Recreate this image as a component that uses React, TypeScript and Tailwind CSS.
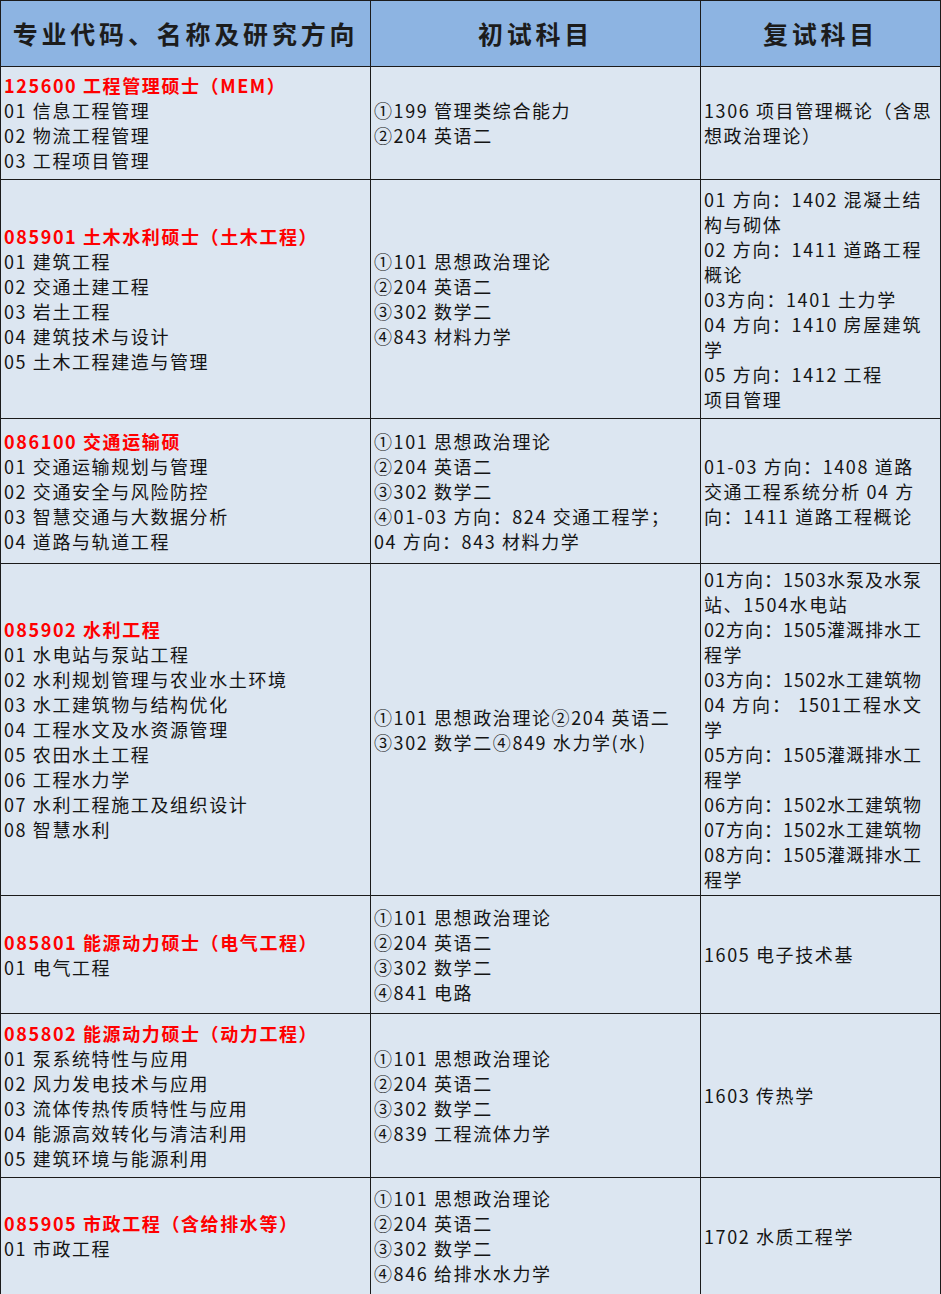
type Line = { t: string; red?: boolean; j?: boolean };

type Row = {
  h: string;
  c1: Line[];
  c2: Line[];
  c3: Line[];
};

const L = (t: string): Line => ({ t });
const R = (t: string): Line => ({ t, red: true });
const J = (t: string): Line => ({ t, j: true });

const rows: Row[] = [
  {
    h: "h-[113px]",
    c1: [R("125600 工程管理硕士（MEM）"), L("01 信息工程管理"), L("02 物流工程管理"), L("03 工程项目管理")],
    c2: [L("①199 管理类综合能力"), L("②204 英语二")],
    c3: [L("1306 项目管理概论（含思"), L("想政治理论）")],
  },
  {
    h: "h-[239px]",
    c1: [
      R("085901 土木水利硕士（土木工程）"),
      L("01 建筑工程"),
      L("02 交通土建工程"),
      L("03 岩土工程"),
      L("04 建筑技术与设计"),
      L("05 土木工程建造与管理"),
    ],
    c2: [L("①101 思想政治理论"), L("②204 英语二"), L("③302 数学二"), L("④843 材料力学")],
    c3: [
      L("01 方向：1402 混凝土结"),
      L("构与砌体"),
      L("02 方向：1411 道路工程"),
      L("概论"),
      L("03方向：1401 土力学"),
      L("04 方向：1410 房屋建筑"),
      L("学"),
      L("05 方向：1412 工程"),
      L("项目管理"),
    ],
  },
  {
    h: "h-[145px]",
    c1: [
      R("086100 交通运输硕"),
      L("01 交通运输规划与管理"),
      L("02 交通安全与风险防控"),
      L("03 智慧交通与大数据分析"),
      L("04 道路与轨道工程"),
    ],
    c2: [
      L("①101 思想政治理论"),
      L("②204 英语二"),
      L("③302 数学二"),
      L("④01-03 方向：824 交通工程学；"),
      L("04 方向：843 材料力学"),
    ],
    c3: [L("01-03 方向：1408 道路"), L("交通工程系统分析 04 方"), L("向：1411 道路工程概论")],
  },
  {
    h: "h-[332px]",
    c1: [
      R("085902 水利工程"),
      L("01 水电站与泵站工程"),
      L("02 水利规划管理与农业水土环境"),
      L("03 水工建筑物与结构优化"),
      L("04 工程水文及水资源管理"),
      L("05 农田水土工程"),
      L("06 工程水力学"),
      L("07 水利工程施工及组织设计"),
      L("08 智慧水利"),
    ],
    c2: [L("①101 思想政治理论②204 英语二"), L("③302 数学二④849 水力学(水)")],
    c3: [
      J("01方向：1503水泵及水泵"),
      L("站、1504水电站"),
      J("02方向：1505灌溉排水工"),
      L("程学"),
      J("03方向：1502水工建筑物"),
      J("04 方向： 1501工程水文"),
      L("学"),
      J("05方向：1505灌溉排水工"),
      L("程学"),
      J("06方向：1502水工建筑物"),
      J("07方向：1502水工建筑物"),
      J("08方向：1505灌溉排水工"),
      L("程学"),
    ],
  },
  {
    h: "h-[118px]",
    c1: [R("085801 能源动力硕士（电气工程）"), L("01 电气工程")],
    c2: [L("①101 思想政治理论"), L("②204 英语二"), L("③302 数学二"), L("④841 电路")],
    c3: [L("1605 电子技术基")],
  },
  {
    h: "h-[164px]",
    c1: [
      R("085802 能源动力硕士（动力工程）"),
      L("01 泵系统特性与应用"),
      L("02 风力发电技术与应用"),
      L("03 流体传热传质特性与应用"),
      L("04 能源高效转化与清洁利用"),
      L("05 建筑环境与能源利用"),
    ],
    c2: [L("①101 思想政治理论"), L("②204 英语二"), L("③302 数学二"), L("④839 工程流体力学")],
    c3: [L("1603 传热学")],
  },
  {
    h: "h-[116px]",
    c1: [R("085905 市政工程（含给排水等）"), L("01 市政工程")],
    c2: [L("①101 思想政治理论"), L("②204 英语二"), L("③302 数学二"), L("④846 给排水水力学")],
    c3: [L("1702 水质工程学")],
  },
];

function Cell({ lines, last }: { lines: Line[]; last?: boolean }) {
  return (
    <div
      className={
        "flex min-w-0 flex-col items-start justify-center pl-[3px] " +
        (last ? "" : "border-r border-[#1b1b1b]")
      }
    >
      {lines.map((ln, i) => (
        <div
          key={i}
          className={
            "leading-[25px] " +
            (ln.red ? "font-bold text-[#ff0000] " : "text-[#141414] ") +
            (ln.j
              ? "w-[218px] text-justify tracking-[1px] [text-align-last:justify]"
              : "whitespace-pre")
          }
        >
          {ln.t}
        </div>
      ))}
    </div>
  );
}

export default function App() {
  return (
    <div className="w-[941px] border border-[#1b1b1b] bg-[#dce6f1] font-['Noto_Sans_CJK_SC','Noto_Sans',sans-serif] text-[18px] tracking-[1.6px]">
      <div className="grid h-[66px] grid-cols-[370px_330px_239px] border-b border-[#1b1b1b] bg-[#8db4e2] text-[25px] font-bold tracking-[3.8px] text-[#1c1c1c]">
        <div className="flex items-center justify-center border-r border-[#1b1b1b]">专业代码、名称及研究方向</div>
        <div className="flex items-center justify-center border-r border-[#1b1b1b]">初试科目</div>
        <div className="flex items-center justify-center">复试科目</div>
      </div>
      {rows.map((r, i) => (
        <div
          key={i}
          className={
            "grid grid-cols-[370px_330px_239px] " +
            r.h +
            (i < rows.length - 1 ? " border-b border-[#1b1b1b]" : "")
          }
        >
          <Cell lines={r.c1} />
          <Cell lines={r.c2} />
          <Cell lines={r.c3} last />
        </div>
      ))}
    </div>
  );
}
